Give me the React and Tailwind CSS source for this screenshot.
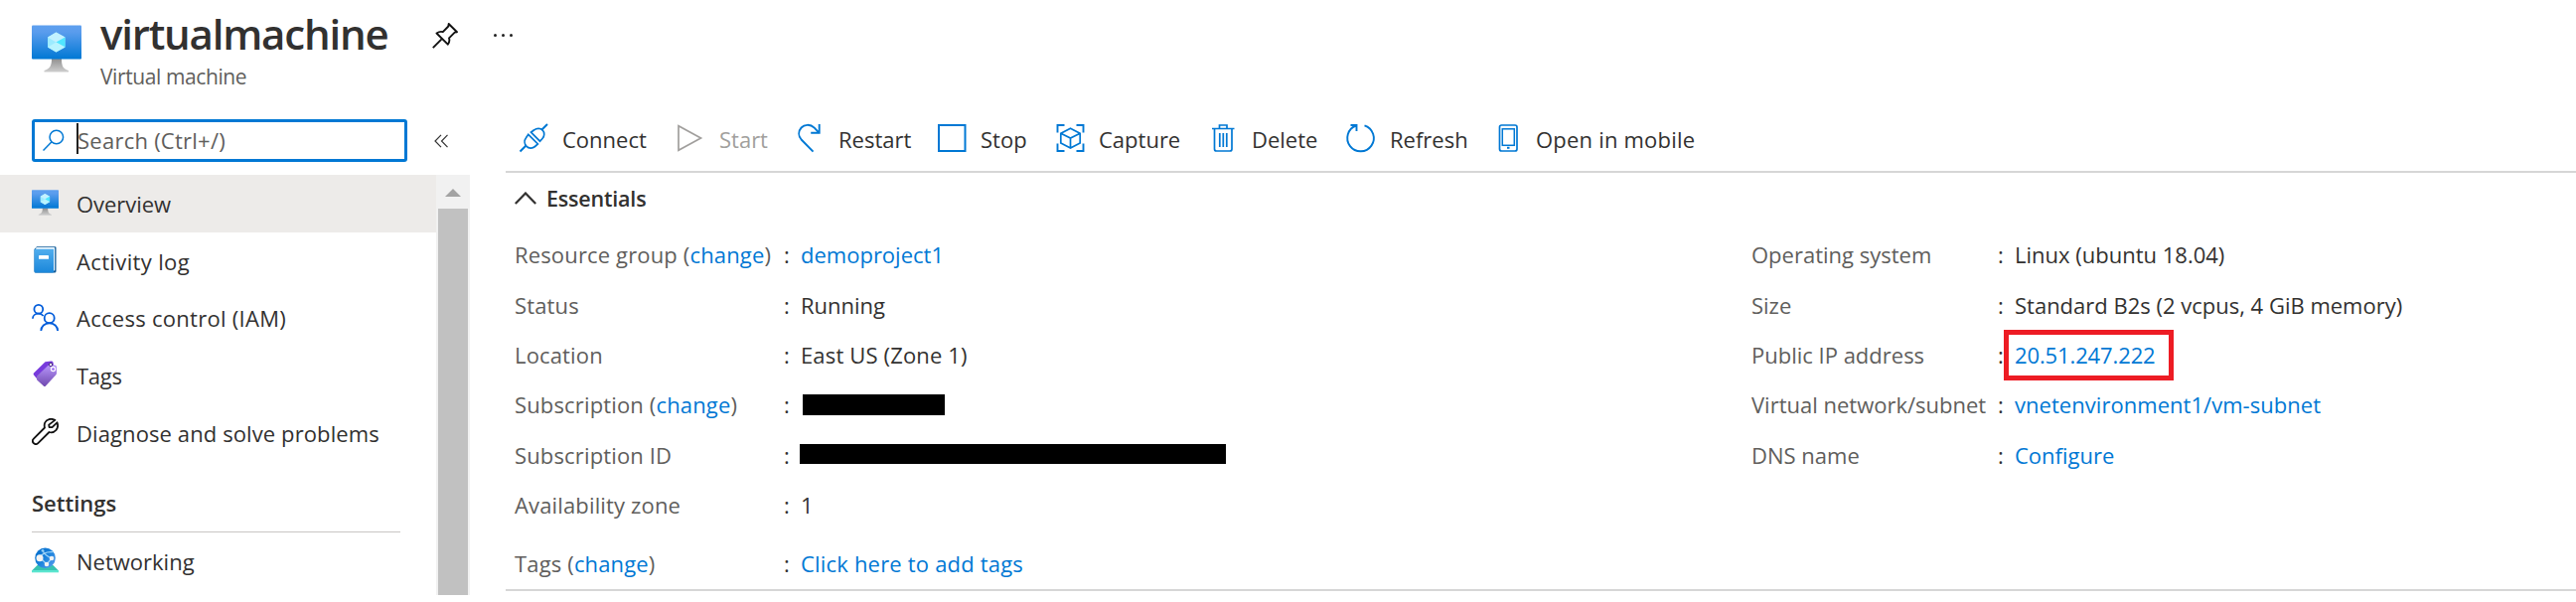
function VmIcon({ className, id }) {
  return (
    <svg viewBox="0 0 50 48" className={className}>
      <defs>
        <linearGradient id={id} x1="0" y1="0" x2="0" y2="1">
          <stop offset="0" stopColor="#5ea0ef" />
          <stop offset="0.2" stopColor="#5a9ced" />
          <stop offset="1" stopColor="#0078d4" />
        </linearGradient>
        <linearGradient id={id + "-stand"} x1="0" y1="0" x2="0" y2="1">
          <stop offset="0" stopColor="#8f8f8f" />
          <stop offset="1" stopColor="#cfcfcf" />
        </linearGradient>
      </defs>
      <path d="M20 34h10c0 7 1 10 7 12v1.500H12.500V46c6-2 7.500-5 7.500-12z" fill={"url(#" + id + "-stand)"} />
      <rect x="0" y="0.500" width="50" height="34" rx="1" fill={"url(#" + id + ")"} />
      <path d="M24.500 7.500l9 5v10l-9 5-8.500-5v-10z" fill="#9cebff" />
      <path d="M24.500 7.500l9 5-9 5-8.500-5z" fill="#c3f1ff" />
      <path d="M33.500 12.500v10l-9-5z" fill="#50e6ff" />
      <path d="M16 22.500l8.500-5 9 5-9 5z" fill="#b8f4ff" />
    </svg>
  );
}

function ActivityIcon() {
  return (
    <svg viewBox="0 0 27 27" className="size-[27px]">
      <defs>
        <linearGradient id="book" x1="0" y1="0" x2="0" y2="1">
          <stop offset="0" stopColor="#50adee" />
          <stop offset="1" stopColor="#1a87da" />
        </linearGradient>
      </defs>
      <path d="M5 .3h18.500a1 1 0 0 1 1 1V25a1.500 1.500 0 0 1-1.500 1.500H4a1.500 1.500 0 0 1-1.500-1.500V3z" fill="#0f5a97" />
      <path d="M4.500 1h17.800c.5 0 .9.300.9.800v22l-1.200 1.200V3H4z" fill="#e9f5fd" />
      <path d="M3 2.800h19v22.700a1 1 0 0 1-1 1H4a1.500 1.500 0 0 1-1.500-1.500V3.500c0-1 .5-.7.500-.7z" fill="url(#book)" />
      <rect x="7" y="9" width="10" height="3.800" rx=".4" fill="#fff" />
    </svg>
  );
}

function PeopleIcon() {
  return (
    <svg viewBox="0 0 27 27" className="size-[27px]" fill="none" stroke="#015cda" strokeWidth="1.800">
      <circle cx="6.800" cy="5.300" r="4.400" />
      <path d="M.9 14.800c0-3 2.600-5.100 5.900-5.100 2 0 3.700.9 4.800 2.300" />
      <circle cx="17.700" cy="14.200" r="5" />
      <path d="M9.300 27c0-4.500 3.700-7.700 8.400-7.700s8.400 3.200 8.400 7.700" />
    </svg>
  );
}

function TagsIcon() {
  return (
    <svg viewBox="0 0 27 27" className="size-[27px]">
      <defs>
        <linearGradient id="tag" x1="0" y1="0" x2="0" y2="1">
          <stop offset="0" stopColor="#b796f9" />
          <stop offset="1" stopColor="#7049b0" />
        </linearGradient>
      </defs>
      <path d="M13.500 1.200 19.500.5a2 2 0 0 1 2 1.200l.5 4L7 20.500 2 14.500a1.500 1.500 0 0 1 0-2z" fill="#773adc" />
      <path d="M16.500 4.700 23 4.500a2 2 0 0 1 2 2v6.300a2 2 0 0 1-.6 1.400L14 25.500a1.600 1.600 0 0 1-2.200 0L5 19.300v-3.500z" fill="url(#tag)" />
      <circle cx="19" cy="4" r="1.700" fill="#fff" stroke="#3c1f75" strokeWidth=".9" />
      <circle cx="21.500" cy="8.500" r="2.100" fill="#a67af4" stroke="#fff" strokeWidth="1.200" />
    </svg>
  );
}

function WrenchIcon() {
  return (
    <svg viewBox="0 0 27 27" className="size-[27px]" fill="none" stroke="#111" strokeWidth="1.800" strokeLinejoin="round">
      <path d="M23.400 1.900C19.500-.3 14.800.9 13.200 4.500c-.7 1.700-.7 3.300-.2 5L1.900 20.600a3.100 3.100 0 0 0 4.400 4.500L17.500 14c2.500.7 5.200-.2 7-2.200 1.700-2 2-5 1-7.500l-5 4.900-3-.2-.3-2.400z" />
    </svg>
  );
}

function NetworkIcon() {
  return (
    <svg viewBox="0 0 27 27" className="size-[27px]">
      <defs>
        <linearGradient id="globe" x1="0" y1="0" x2="1" y2="1">
          <stop offset="0" stopColor="#0069c8" />
          <stop offset="0.500" stopColor="#1a82dc" />
          <stop offset="1" stopColor="#5ea0ef" />
        </linearGradient>
      </defs>
      <path d="M5.500 18h16l5.500 5.500H0z" fill="#37c2b1" />
      <rect y="23" width="27" height="2.300" fill="#5be5cf" />
      <circle cx="13.500" cy="10.700" r="10.300" fill="url(#globe)" />
      <path d="M8 10.500c2-4 6.500-6.300 13.500-5.800M10.500 2.500c2 4.500 5.500 7 9.500 8.500M8.500 10.500l6.500 6.500 5.500-6.500" stroke="#9cd2f7" strokeWidth="1.300" fill="none" />
      <circle cx="8" cy="10.700" r="3.500" fill="#f2f2f2" />
      <circle cx="20" cy="11" r="2.300" fill="#f2f2f2" />
      <circle cx="15" cy="17" r="2.300" fill="#f2f2f2" />
      <circle cx="11" cy="3.300" r="1.400" fill="#8ccaf5" />
    </svg>
  );
}

function Tool({ children, muted }) {
  return (
    <svg
      viewBox="0 0 28 28"
      className={"size-7 shrink-0 overflow-visible " + (muted ? "text-[#a19f9d]" : "text-[#0078d4]")}
      fill="none"
      stroke="currentColor"
      strokeWidth="1.700"
    >
      {children}
    </svg>
  );
}

const tools = [
  {
    label: "Connect",
    width: "w-[158px]",
    icon: (
      <Tool>
        <path d="M.5 27.500l6-6M22 6l6-6" strokeWidth="2" />
        <path d="M8.800 10.300l9.600 9.600-2.900 2.600c-2.600 2.300-6.300 2-8.500-.2s-2.600-5.800-.5-8.500z" />
        <path d="M11.500 8.200l9 9 2.500-2.700c2.200-2.300 2.400-6.200.2-8.500s-6-2.200-8.500-.2z" />
      </Tool>
    ),
  },
  { label: "Start", width: "w-[120px]", muted: true, icon: <Tool muted><path d="M2 1.800v24.400L24.500 14z" /></Tool> },
  {
    label: "Restart",
    width: "w-[143px]",
    icon: (
      <Tool>
        <path d="M23.700 0v8.800h-8.500M23.400 8.600l-4.700-4.900C14.500-.5 8.500.3 5.600 3.500c-3.300 3.700-3 8.500 0 12L17.500 27.600" strokeWidth="1.900" />
      </Tool>
    ),
  },
  {
    label: "Stop",
    width: "w-[119px]",
    icon: (
      <Tool>
        <rect x="1" y="1" width="26.500" height="26" strokeWidth="2" />
      </Tool>
    ),
  },
  {
    label: "Capture",
    width: "w-[154px]",
    icon: (
      <Tool>
        <path d="M1.500 8.500V1h7M20.500 1h7v7.500M27.500 19.500V27h-7M8.500 27h-7v-7.500" strokeWidth="1.900" />
        <path d="M14.500 4.200l9.700 5V19l-9.700 5-9.700-5V9.200zM4.800 9.200l9.700 4.800 9.700-4.800M14.500 14v10" />
      </Tool>
    ),
  },
  {
    label: "Delete",
    width: "w-[139px]",
    icon: (
      <Tool>
        <path d="M3 4.500h22.500M10.500 4.500V1h7.500v3.500M5.500 4.500V25a2 2 0 0 0 2 2H21a2 2 0 0 0 2-2V4.500M10.800 9v14M14.300 9v14M17.800 9v14" />
      </Tool>
    ),
  },
  {
    label: "Refresh",
    width: "w-[147px]",
    icon: (
      <Tool>
        <path d="M17.500 1.300A13.300 13.300 0 1 1 9 1.500M3.500 1h6v6" strokeWidth="1.900" />
      </Tool>
    ),
  },
  {
    label: "Open in mobile",
    width: "w-[220px]",
    cls: "tracking-[0.2px]",
    icon: (
      <Tool>
        <rect x="6.500" y="1" width="17.500" height="26" rx="2" />
        <rect x="9.300" y="4.800" width="12" height="16.500" strokeWidth="1.500" />
        <path d="M14 23.800h2.500" strokeWidth="2" />
      </Tool>
    ),
  },
];

const nav = [
  { label: "Overview", icon: <div className="flex h-[27px] items-center"><VmIcon id="vm-small" className="h-[26px] w-[27px]" /></div>, active: true, cls: "tracking-[-0.05px]" },
  { label: "Activity log", icon: <ActivityIcon />, cls: "tracking-[0.36px]" },
  { label: "Access control (IAM)", icon: <PeopleIcon />, cls: "tracking-[0.28px]" },
  { label: "Tags", icon: <TagsIcon />, cls: "tracking-[-0.3px]" },
  { label: "Diagnose and solve problems", icon: <WrenchIcon />, cls: "tracking-[0.1px]" },
];

function NavItem({ label, icon, active, cls = "" }) {
  return (
    <div className={"flex h-[57.7px] shrink-0 items-center pl-8 " + (active ? "bg-[#edebe9]" : "")}>
      <div className="mr-[18px] h-[29px] w-[27px]">{icon}</div>
      <span className={cls}>{label}</span>
    </div>
  );
}

const left = [
  { label: "Resource group", change: true, value: "demoproject1", link: true },
  { label: "Status", value: "Running" },
  { label: "Location", value: "East US (Zone 1)", cls: "tracking-[0.15px]" },
  { label: "Subscription", change: true, bar: "ml-0.5 h-[21px] w-[143px]" },
  { label: "Subscription ID", bar: "-ml-px mt-[-2px] h-5 w-[429px]" },
  { label: "Availability zone", value: "1" },
];

const right = [
  { label: "Operating system", value: "Linux (ubuntu 18.04)" },
  { label: "Size", value: "Standard B2s (2 vcpus, 4 GiB memory)" },
  { label: "Public IP address", value: "20.51.247.222", link: true, marked: true, cls: "tracking-[-0.12px]" },
  { label: "Virtual network/subnet", value: "vnetenvironment1/vm-subnet", link: true, cls: "tracking-[0.04px]" },
  { label: "DNS name", value: "Configure", link: true },
];

function Row({ label, change, value, link, bar, marked, wide, cls = "", height = "h-[50.4px]" }) {
  return (
    <div className={"flex shrink-0 items-center " + height}>
      <span className={"text-[#605e5c] " + (wide ? "w-[271px] tracking-[0.15px]" : "w-[248px]")}>
        {label}
        {change && (
          <>
            {" "}(<a className="text-[#0078d4]">change</a>)
          </>
        )}
      </span>
      <span className="w-[17px]">:</span>
      {bar ? (
        <span className={"bg-black " + bar} />
      ) : (
        <span className={"relative " + cls + (link ? " text-[#0078d4]" : "")}>
          {value}
          {marked && <span className="absolute -top-[10px] -left-[11px] h-[51px] w-[171px] border-[5px] border-[#ed1c24]" />}
        </span>
      )}
    </div>
  );
}

export default function App() {
  return (
    <div className="flex h-[606px] w-[2593px] flex-col overflow-hidden bg-white font-['Open_Sans',sans-serif] text-[22px] leading-[30px] whitespace-nowrap text-[#323130]">
      <header className="flex h-[104px] shrink-0 items-start pl-8">
        <VmIcon id="vm-large" className="mt-[25px] h-12 w-[50px]" />
        <div className="ml-[19px] w-[334px]">
          <h1 className="mt-[7px] text-[42px] leading-[54px] font-semibold tracking-[-1.2px]">virtualmachine</h1>
          <p className="mt-px text-[21px] leading-[30px] tracking-[-0.4px] text-[#605e5c]">Virtual machine</p>
        </div>
        <svg viewBox="0 0 26 26" className="mt-[23px] size-[26px]" fill="none" stroke="#111" strokeWidth="1.900" strokeLinejoin="round">
          <path d="M.8 25.200l8.500-8.500M16.700 1l8.300 8.200-2.300.4-5.700 5.700c.8 2.300.2 4.500-1.200 6.400L4.500 10.500c2-1.400 4-2 6.300-1.300l5.500-5.700z" />
        </svg>
        <div className="mt-[34px] ml-9 flex gap-[5px]">
          <i className="size-[3px] rounded-full bg-[#222]" />
          <i className="size-[3px] rounded-full bg-[#222]" />
          <i className="size-[3px] rounded-full bg-[#222]" />
        </div>
      </header>

      <div className="flex min-h-0 flex-1">
        <aside className="flex w-[473px] shrink-0 flex-col">
          <div className="flex h-[72px] shrink-0 pt-4 pl-8">
            <div className="flex h-[43px] w-[378px] items-center rounded-[3px] border-[3px] border-[#0078d4]">
              <svg viewBox="0 0 22 22" className="mb-px ml-2 size-[22px]" fill="none" stroke="#0078d4" strokeWidth="1.500">
                <circle cx="13.800" cy="8" r="6.800" />
                <path d="M.5 21.500l8.500-8.700" />
              </svg>
              <span className="mb-1 ml-3 h-[31px] w-0.5 bg-[#222]" />
              <span className="mb-0.5 ml-[-1px] tracking-[0.25px] text-[#605e5c]">Search (Ctrl+/)</span>
            </div>
            <svg viewBox="0 0 14 14" className="mt-[15px] ml-[27px] size-3.5" fill="none" stroke="#333" strokeWidth="1.200">
              <path d="M7 .8L1 7l6 6.200M13.500.8l-6 6.200 6 6.200" />
            </svg>
          </div>
          <div className="flex h-[423px]">
            <nav className="flex w-[439px] flex-col">
              {nav.map((n) => (
                <NavItem key={n.label} {...n} />
              ))}
              <div className="ml-8 flex h-[72px] w-[371px] items-center border-b border-[#c8c6c4] pt-[13px] font-semibold">Settings</div>
              <NavItem label="Networking" icon={<NetworkIcon />} />
            </nav>
            <div className="flex w-[34px] flex-col items-center bg-[#f1f1f1]">
              <svg viewBox="0 0 16 8" className="mt-3.5 mb-3 h-2 w-4" fill="#a3a3a3">
                <path d="M8 0l8 8H0z" />
              </svg>
              <div className="w-[30px] flex-1 bg-[#c1c1c1]" />
            </div>
          </div>
        </aside>

        <main className="ml-9 flex flex-1 flex-col">
          <div className="flex h-[70px] shrink-0 items-center border-b-2 border-[#d6d6d6] pl-3.5">
            {tools.map((t) => (
              <div key={t.label} className={"flex shrink-0 items-center gap-[15px] pt-[4px] " + t.width}>
                <span className="-mt-0.5">{t.icon}</span>
                <span className={t.muted ? "text-[#a19f9d]" : t.cls}>{t.label}</span>
              </div>
            ))}
          </div>
          <div className="flex h-[57px] shrink-0 items-center pl-[9px]">
            <svg viewBox="0 0 22 13" className="mt-[-7px] h-[13px] w-[22px]" fill="none" stroke="#323130" strokeWidth="2.200">
              <path d="M.8 12L11 1.500 21.200 12" />
            </svg>
            <span className="mt-[-6px] ml-2.5 text-[21.500px] font-semibold tracking-[-0.2px]">Essentials</span>
          </div>
          <div className="flex h-[364px] shrink-0 border-b-2 border-[#d6d6d6] pl-[9px]">
            <div className="flex w-[1245px] flex-col">
              {left.map((r) => (
                <Row key={r.label} wide {...r} />
              ))}
              <Row wide height="h-[67px]" label="Tags" change value="Click here to add tags" link cls="tracking-[0.19px]" />
            </div>
            <div className="flex flex-col">
              {right.map((r) => (
                <Row key={r.label} {...r} />
              ))}
            </div>
          </div>
        </main>
      </div>
    </div>
  );
}
